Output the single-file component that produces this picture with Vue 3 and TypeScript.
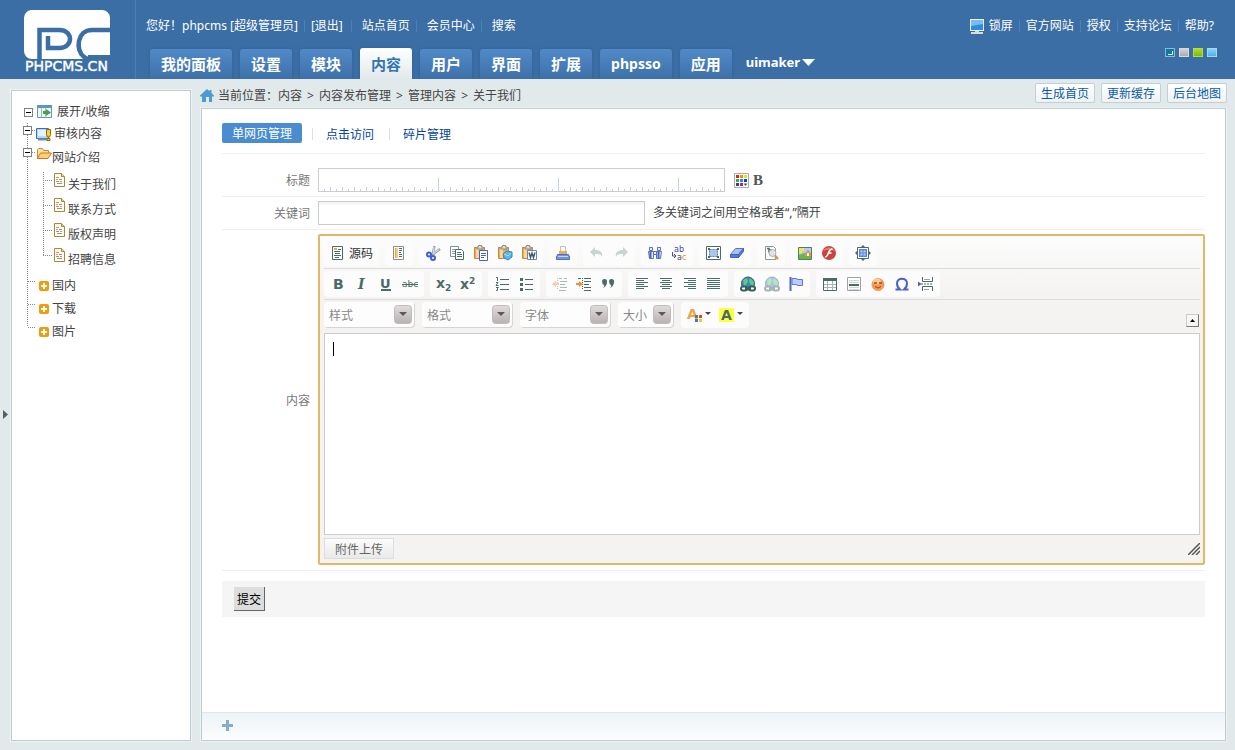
<script setup lang="ts">
import { ref } from 'vue'

interface Tool { icon: string; label: string; dim?: boolean }
interface Combo { label: string; small?: boolean }

const tabs = ['我的面板', '设置', '模块', '内容', '用户', '界面', '扩展', 'phpsso', '应用']
const activeTab = ref('内容')
const userLinks = ['站点首页', '会员中心', '搜索']
const helpLinks = ['官方网站', '授权', '支持论坛', '帮助?']
const crumbs = ['内容', '内容发布管理', '管理内容', '关于我们']
const shortcuts = ['生成首页', '更新缓存', '后台地图']
const pages = ['关于我们', '联系方式', '版权声明', '招聘信息']
const categories = ['国内', '下载', '图片']
const title = ref('')
const keywords = ref('')
const body = ref('')

const tool = (icon: string, label: string, dim = false): Tool => ({ icon, label, dim })

const rowOne: Tool[][] = [
  [tool('template', '模板')],
  [tool('cut', '剪切'), tool('copy', '复制'), tool('paste', '粘贴'), tool('pasteText', '粘贴为无格式文本'), tool('pasteWord', '从 Word 粘贴')],
  [tool('print', '打印')],
  [tool('undo', '撤销', true), tool('redo', '重做', true)],
  [tool('find', '查找'), tool('replace', '替换')],
  [tool('selectAll', '全选'), tool('eraser', '清除格式')],
  [tool('preview', '预览')],
  [tool('image', '图像'), tool('flash', 'Flash')],
  [tool('maximize', '全屏')],
]
const rowTwo: Tool[][] = [
  [tool('bold', '加粗'), tool('italic', '倾斜'), tool('underline', '下划线'), tool('strike', '删除线')],
  [tool('sub', '下标'), tool('sup', '上标')],
  [tool('ol', '编号列表'), tool('ul', '项目列表')],
  [tool('outdent', '减少缩进', true), tool('indent', '增加缩进'), tool('quote', '块引用')],
  [tool('left', '左对齐'), tool('center', '居中'), tool('right', '右对齐'), tool('justify', '两端对齐')],
  [tool('link', '超链接'), tool('unlink', '取消超链接', true), tool('anchor', '锚点')],
  [tool('table', '表格'), tool('rule', '水平线'), tool('smiley', '表情'), tool('omega', '特殊符号'), tool('pageBreak', '分页符')],
]
const combos: Combo[] = [{ label: '样式' }, { label: '格式' }, { label: '字体' }, { label: '大小', small: true }]

const ink = '#4a6b68'
const lines = (rows: number[][]) =>
  rows.map(([x, y, w]) => `<path d="M${x} ${y}.5h${w}" stroke="${ink}"/>`).join('')

const clipboard =
  '<path d="M1.5 2.5h10v11h-10z" fill="#f0a848" stroke="#c48a48"/><path d="M3 4h3v9H3z" fill="#ffd596"/><path d="M4 4V2h1.500V0.500h3V2H10v2z" fill="#dcdcdc" stroke="#888"/>'
const globe =
  '<circle cx="8" cy="7.500" r="6.500" fill="#3f7fe0" stroke="#2b4fa0"/><path d="M3 4l4-2 1 3-2 4-2 1zM10 2l4 4-1 4-3-2-1-3z" fill="#5fd060"/><path d="M1 12.500a2 2 0 012-2h2a2 2 0 010 4H3a2 2 0 01-2-2zM9 12.500a2 2 0 012-2h2a2 2 0 010 4h-2a2 2 0 01-2-2zM5 12.500h6" fill="#fff" stroke="#3d5d58" stroke-width="2"/>'

const icons: Record<string, string> = {
  source: `<path d="M2.500 1.500h10v13h-10z" fill="#fff" stroke="${ink}"/><path d="M4 4.500h3M4 3.500h3" stroke="#f0a040"/><path d="M8 4.500h3M4 6.500h6M5 8.500h5M4 10.500h7M5 12.500h4" stroke="${ink}"/>`,
  template: `<path d="M2.500 1.500h10v13h-10z" fill="#fff" stroke="#8a8f80"/><path d="M4 3h3v10H4z" fill="#fbc880"/><path d="M4.500 3v10" stroke="#f0a040"/><path d="M8 3.500h3M8 5.500h3M8 7.500h2M8 9.500h3M8 11.500h3" stroke="${ink}"/>`,
  cut: '<path d="M9.500 1L8 8M15 4L7 10" stroke="#9aa4a8" stroke-width="2.500"/><path d="M9 2L8.500 8M14 4.500L8 9" stroke="#dfe5e8"/><circle cx="4" cy="9.500" r="2" fill="#fff" stroke="#3a62d0" stroke-width="2"/><circle cx="8" cy="13" r="2" fill="#fff" stroke="#3a62d0" stroke-width="2"/>',
  copy: `<path d="M1.500 1.500h8v10h-8z" fill="#fff" stroke="#7d9491"/><path d="M3 4.500h4M3 6.500h3M3 8.500h4" stroke="#8ba09d"/><path d="M6.500 4.500h6l2 2v8h-8z" fill="#fff" stroke="${ink}"/><path d="M8 7.500h4M8 9.500h5M8 11.500h5" stroke="${ink}"/>`,
  paste: clipboard + '<path d="M6.500 5.500h8v10h-8z" fill="#fff" stroke="#4560c8"/><path d="M8 8.500h5M8 10.500h5M8 12.500h3" stroke="#4560c8"/>',
  pasteText: clipboard + '<path d="M6 9l4-3 5 1v5l-4 3-4-2z" fill="#58b8e8" stroke="#3484c0"/><path d="M7 9l4 2 3-3" stroke="#a8e0f8" fill="none"/>',
  pasteWord: clipboard + '<path d="M6.500 5.500h9v9h-9z" fill="#fff" stroke="#6a8aa0"/><path d="M8 7.500l1.500 5L11 8l1.500 4.500L14 7.500" fill="none" stroke="#3d5d78" stroke-width="1.500"/>',
  print: '<path d="M5.500 1.500h5v6h-5z" fill="#fff" stroke="#b8c0c8"/><path d="M4 6h8v3H4z" fill="#f4a848"/><path d="M2.500 9.500h11l1 2.500v2.500h-13V12z" fill="#6b93e8" stroke="#4f70c8"/><path d="M3 11.500h10" stroke="#c8dcff"/>',
  undo: '<path d="M1 7l5-5v3c5 0 8 2 7 7-1-3-3-3-7-3v3z" fill="#8fa39f"/>',
  redo: '<path d="M15 7l-5-5v3c-5 0-8 2-7 7 1-3 3-3 7-3v3z" fill="#8fa39f"/>',
  find: '<path d="M2.500 2.500h3v3h-3zM10.500 2.500h3v3h-3zM1.500 6.500h5v7h-4zM9.500 6.500h5l-1 7h-4zM6.500 6.500h3v3h-3z" fill="#e6eeff" stroke="#5c70b4"/><path d="M3.500 7v6M11.500 7v6" stroke="#4060c0" stroke-width="2"/>',
  replace: '<text x="3" y="7" font-size="8" font-family="DejaVu Sans" fill="#4448a0">ab</text><text x="6" y="15" font-size="8" font-family="DejaVu Sans" fill="#4448a0">a</text><text x="11" y="15" font-size="8" font-family="DejaVu Sans" fill="#f09020">c</text><path d="M1.500 7v4h3M3 9l2 2-2 2" stroke="#4448a0" fill="none"/>',
  selectAll: `<path d="M1.500 1.500h14v13h-14z" fill="#fff" stroke="${ink}"/><path d="M4.500 4.500h8v7h-8z" fill="#a9c6f2" stroke="#5b7fb0" stroke-dasharray="2 1"/><path d="M3 3h2v2H3zM12 3h2v2h-2zM3 11h2v2H3zM12 11h2v2h-2z" fill="${ink}"/>`,
  eraser: '<path d="M6.500 3.500h8l-5 6h-8z" fill="#a6c2f8" stroke="#5674cc"/><path d="M1.500 9.500h8v3h-8zM9.500 9.500l5-6v3l-5 6z" fill="#557be0" stroke="#4563c0"/>',
  preview: `<path d="M2.500 1.500h8l2 2v11h-10z" fill="#fff" stroke="#8b9794"/><path d="M4 3.500h2v4M6 5h3" stroke="${ink}" stroke-width="1.500" fill="none"/><circle cx="9.500" cy="8" r="3.500" fill="#dfe3e5" stroke="#a9b0b2"/><path d="M12 11l3 3" stroke="#e09838" stroke-width="2.500"/>`,
  image: '<path d="M1.500 2.500h13v12h-13z" fill="#9fd4ff" stroke="#587868"/><path d="M2 10l5-2 7 3v3H2z" fill="#67b845"/><path d="M2 3h5v3H5v2H2z" fill="#ffe24a"/><path d="M8 8l3-3 3 3v3H8z" fill="#f09040"/><path d="M10 8h2v3h-2z" fill="#fff"/>',
  flash: '<circle cx="8" cy="8" r="7" fill="#c8443c"/><path d="M2 6a7 7 0 0112 0q-6-3-12 0" fill="#dd8078"/><path d="M11.500 4C8 4 8 7 7 9s-1 3-3 3M7 8h3.500" fill="none" stroke="#fff" stroke-width="1.600"/>',
  maximize: `<path d="M8 0l2 2H6zM8 16l2-2H6zM0 8l2-2v4zM16 8l-2-2v4z" fill="${ink}"/><path d="M2.500 2.500h11v11h-11z" fill="#fff" stroke="${ink}"/><path d="M4 4h8v8H4z" fill="#5a83dc"/><path d="M5.500 5.500h5v5h-5z" fill="#bcd4ff" stroke="#83a7ef"/><path d="M8 5v6M5 8h6" stroke="#5a83dc"/>`,
  bold: `<text x="3" y="13" font-size="14" font-weight="700" font-family="DejaVu Sans" fill="${ink}">B</text>`,
  italic: `<text x="4" y="13" font-size="14" font-weight="700" font-style="italic" font-family="DejaVu Serif" fill="${ink}">I</text>`,
  underline: `<text x="2" y="12" font-size="13" font-weight="700" font-family="DejaVu Sans" fill="${ink}">U</text><path d="M3 14h10" stroke="${ink}" stroke-width="2"/>`,
  strike: `<text x="0" y="11" font-size="9" font-family="DejaVu Sans" fill="${ink}">abc</text><path d="M0 8.500h16" stroke="${ink}"/>`,
  sub: `<text x="0" y="12" font-size="14" font-weight="700" font-family="DejaVu Sans" fill="${ink}">x</text><text x="9" y="15" font-size="9" font-weight="700" font-family="DejaVu Sans" fill="${ink}">2</text>`,
  sup: `<text x="0" y="13" font-size="14" font-weight="700" font-family="DejaVu Sans" fill="${ink}">x</text><text x="9" y="8" font-size="9" font-weight="700" font-family="DejaVu Sans" fill="${ink}">2</text>`,
  ol: lines([[6, 3, 9], [6, 8, 9], [6, 13, 9]]) + `<path d="M2 1.500h1.500V5M2 6.500h2L2 9.500h2.500M2 11.500h2.500L3 13l1 1-2 .5" fill="none" stroke="${ink}"/>`,
  ul: lines([[7, 3, 8], [7, 8, 8], [7, 13, 8]]) + `<path d="M2 2h3v3H2zM2 7h3v3H2zM2 12h3v3H2z" fill="${ink}"/>`,
  outdent: lines([[7, 2, 3], [12, 2, 3], [8, 5, 7], [8, 8, 5], [8, 11, 7], [7, 14, 7]]) + '<path d="M5.500 2v12" stroke="#789" stroke-dasharray="1 1"/><path d="M0 8l4-3v2h3v2H4v2z" fill="#f4902c"/>',
  indent: lines([[2, 2, 3], [8, 2, 7], [8, 5, 7], [8, 8, 5], [8, 11, 7], [8, 14, 7]]) + `<path d="M6.500 2v12" stroke="${ink}" stroke-dasharray="1 1"/><path d="M7 8L3 5v2H0v2h3v2z" fill="#f4902c"/>`,
  quote: `<path d="M2 5a2.500 2.500 0 115 1q0 4-4 6 2-2 1-3-2-1-2-4zM9 5a2.500 2.500 0 115 1q0 4-4 6 2-2 1-3-2-1-2-4z" fill="${ink}"/>`,
  left: lines([[2, 2, 12], [2, 4, 8], [2, 6, 12], [2, 8, 8], [2, 10, 12], [2, 12, 8]]),
  center: lines([[2, 2, 12], [4, 4, 8], [2, 6, 12], [4, 8, 8], [2, 10, 12], [4, 12, 8]]),
  right: lines([[2, 2, 12], [6, 4, 8], [2, 6, 12], [6, 8, 8], [2, 10, 12], [6, 12, 8]]),
  justify: lines([[1, 2, 13], [1, 4, 13], [1, 6, 13], [1, 8, 13], [1, 10, 13], [1, 12, 13]]),
  link: globe,
  unlink: globe,
  anchor: '<path d="M2.500 1v14" stroke="#4a68c8" stroke-width="2"/><path d="M4 2.500h4l2 1h4.500v6H10l-2-1H4z" fill="#b9cdf5" stroke="#6078c0"/>',
  table: `<path d="M1.500 2.500h13v12h-13z" fill="#fff" stroke="${ink}"/><path d="M1 2h14v3H1z" fill="${ink}"/><path d="M2 8.500h12M2 11.500h12M5.500 5v9M10.500 5v9" stroke="#a9b6b4"/>`,
  rule: `<path d="M1.500 1.500h13v13h-13z" fill="#fff" stroke="#9aa5a3"/><path d="M3 4.500h10M3 6.500h10M3 11.500h10M3 13.500h10" stroke="#cfd6d4"/><path d="M3 9h10" stroke="${ink}" stroke-width="2"/>`,
  smiley: '<circle cx="8" cy="8.500" r="6.500" fill="#f49a50"/><ellipse cx="7" cy="5.500" rx="4" ry="3" fill="#ffc890"/><path d="M4 7h3M9 7h3" stroke="#8a5030" stroke-width="1.500"/><path d="M5 10.500q3 3 6 0" fill="none" stroke="#b03820"/>',
  omega: '<path d="M1.500 13.500H6Q3 11 3 7.500C3 1 13 1 13 7.500Q13 11 10 13.500h4.500" fill="none" stroke="#4a60c8" stroke-width="2"/>',
  pageBreak: `<path d="M4.500 1v4.500h10V1M4.500 15v-4.500h10V15" fill="#fff" stroke="${ink}"/><path d="M3 8h12" stroke="${ink}" stroke-dasharray="2 1"/><path d="M0 5.500L3.500 8 0 10.500z" fill="#4a60c8"/><path d="M6 3.500h6M6 13.500h5" stroke="#9aa5a3"/>`,
}
</script>

<template>
  <div class="page">
    <header class="top">
      <a class="logo" href="#" aria-label="PHPCMS.CN">
        <svg width="90" height="64" viewBox="23 9 90 64">
          <path d="M31 10h71a8 8 0 0 1 8 8v37H88v4H32a8 8 0 0 1-8-8V18a8 8 0 0 1 7-8z" fill="#fff" />
          <path d="M39.500 60V30h20c14 0 14 18 0 18H48V36" fill="none" stroke="#3b6ea5" stroke-width="4.500" />
          <path d="M111 30H92C77 30 75 50 84 57l5 3" fill="none" stroke="#3b6ea5" stroke-width="4.500" />
          <text x="25" y="71" font-size="14" font-family="DejaVu Sans, sans-serif" fill="#fff" stroke="#fff" stroke-width=".4">PHPCMS.CN</text>
        </svg>
      </a>
      <div class="top-main">
        <div class="top-row">
          <div class="greeting">
            <span>您好！phpcms [超级管理员]</span>
            <a class="tight" href="#">[退出]</a>
            <a v-for="item in userLinks" :key="item" href="#">{{ item }}</a>
          </div>
          <div class="help">
            <a class="lock" href="#">
              <svg width="16" height="16" viewBox="0 0 16 16" aria-hidden="true">
                <path d="M1 1h14v12H1z" fill="#e8f2fb" /><path d="M2 2h12v10H2z" fill="#2f8be0" />
                <path d="M2 2h12v4L2 8z" fill="#7abcf4" /><path d="M6 13h4v1H6zM2 14h12v2H2z" fill="#d5dde4" />
              </svg>锁屏</a>
            <a v-for="item in helpLinks" :key="item" href="#">{{ item }}</a>
          </div>
        </div>
        <div class="tab-row">
          <nav class="tabs">
            <a v-for="tab in tabs" :key="tab" href="#" :class="['tab', { active: tab === activeTab, latin: tab === 'phpsso' }]" @click.prevent="activeTab = tab">{{ tab }}</a>
            <button class="more" type="button">uimaker
              <svg width="13" height="7" viewBox="0 0 13 7" aria-hidden="true"><path d="M0 0h13L6.500 7z" fill="#fff" /></svg>
            </button>
          </nav>
          <div class="skins">
            <button class="skin teal" type="button" aria-label="默认风格"><svg width="8" height="7" viewBox="0 0 8 7"><path d="M2 5.500h4.500V2" stroke="#fff" fill="none" /></svg></button>
            <button class="skin gray" type="button" aria-label="灰色风格"></button>
            <button class="skin green" type="button" aria-label="绿色风格"></button>
            <button class="skin sky" type="button" aria-label="天蓝风格"></button>
          </div>
        </div>
      </div>
    </header>

    <div class="body">
      <button class="gutter" type="button" aria-label="展开与关闭">
        <svg width="7" height="11" viewBox="0 0 7 11"><path d="M1 1v9l5-4.500z" fill="#555f66" /></svg>
      </button>
      <aside class="side">
        <a class="node root" href="#">
          <span class="toggle"></span>
          <svg class="pic" width="16" height="16" viewBox="0 0 16 16" aria-hidden="true">
            <path d="M.5 1.500h14v12H.5z" fill="#eef7ee" stroke="#6f96b8" /><path d="M0 1h15v3H0z" fill="#5d93cf" />
            <path d="M4.500 4v9M8.500 4v9" stroke="#9cc0a8" /><path d="M6 7h3V5l5 3.500-5 3.500v-2H6z" fill="#46a052" />
          </svg>
          <span>展开/收缩</span>
        </a>
        <ul class="branch">
          <li>
            <a class="node first" href="#">
              <span class="toggle"></span><i class="dots short"></i>
              <svg class="pic" width="16" height="16" viewBox="0 0 16 16" aria-hidden="true">
                <path d="M.5 2.500h12v10H.5z" fill="#b8d8f8" stroke="#3b6ab8" /><path d="M2 4h8v6H2z" fill="#e4f2ff" /><path d="M2 13.500h9" stroke="#7a8ca8" stroke-width="2" />
                <path d="M10.500 3.500h4v5l-1 2.500h-2l-1-2.500z" fill="#f8d030" stroke="#8a6a10" /><path d="M11 12.500h3v2h-3z" fill="#f8d030" stroke="#8a6a10" />
              </svg>
              <span>审核内容</span>
            </a>
          </li>
          <li>
            <a class="node folder" href="#">
              <span class="toggle"></span><i class="dots short"></i>
              <svg class="pic" width="16" height="14" viewBox="0 0 16 14" aria-hidden="true">
                <path d="M1.500 11.500v-9l1-1h4l1 2h5v3" fill="#ffe2a0" stroke="#c88a30" /><path d="M1.500 11.500l3-5.500h11l-3.500 5.500z" fill="#ffcf78" stroke="#c07a28" />
              </svg>
              <span>网站介绍</span>
            </a>
            <ul class="leaves">
              <li v-for="page in pages" :key="page">
                <a class="leaf" href="#">
                  <i class="dots"></i>
                  <svg width="12" height="14" viewBox="0 0 12 14" aria-hidden="true">
                    <path d="M.5.500h7l3 3v10H.5z" fill="#fffdf2" stroke="#a8873a" /><path d="M7.500.500v3h3" fill="#e8d49a" stroke="#a8873a" />
                    <path d="M2 4.500h3M2 6.500h2M6 8.500h2" stroke="#f08078" /><path d="M5 6.500h3M2 8.500h3M3 10.500h5" stroke="#7f9f90" />
                  </svg>
                  <span>{{ page }}</span>
                </a>
              </li>
            </ul>
          </li>
          <li v-for="item in categories" :key="item">
            <a class="category" href="#">
              <i class="dots"></i>
              <svg width="10" height="10" viewBox="0 0 10 10" aria-hidden="true">
                <rect width="10" height="10" rx="2" fill="#f09c08" /><path d="M5 2v6M2 5h6" stroke="#fff" stroke-width="2" />
              </svg>
              <span>{{ item }}</span>
            </a>
          </li>
        </ul>
      </aside>

      <div class="main">
        <div class="bar">
          <nav class="crumbs" aria-label="当前位置">
            <svg width="14" height="13" viewBox="0 0 14 13" aria-hidden="true"><path d="M7 0l2.500 2.200V1h2v3L14 6.500V7.500h-2V13H9V8H6v5H2V7.500H0v-1z" fill="#4e9bd0" /></svg>
            <span class="where">当前位置：</span>
            <template v-for="(crumb, i) in crumbs" :key="crumb"><span v-if="i" class="sep">&gt;</span><span>{{ crumb }}</span></template>
          </nav>
          <div class="shortcuts"><button v-for="item in shortcuts" :key="item" type="button">{{ item }}</button></div>
        </div>

        <section class="panel">
          <form class="content" @submit.prevent>
            <nav class="subtabs">
              <a class="current" href="#">单网页管理</a>
              <a href="#">点击访问</a>
              <a href="#">碎片管理</a>
            </nav>

            <div class="row title-row">
              <label for="title">标题</label>
              <div class="field">
                <input id="title" v-model="title" class="ruler" type="text">
                <button class="bare palette" type="button" aria-label="标题颜色">
                  <svg width="15" height="15" viewBox="0 0 15 15">
                    <path d="M.5.500h14v14H.5z" fill="#fff" stroke="#aaa" />
                    <path d="M2 2h3v3H2z" fill="#e02010" /><path d="M6 2h3v3H6z" fill="#f88820" /><path d="M10 2h3v3h-3z" fill="#ffd800" />
                    <path d="M2 6h3v3H2z" fill="#30b030" /><path d="M6 6h3v3H6z" fill="#1890f0" /><path d="M10 6h3v3h-3z" fill="#1040b0" />
                    <path d="M2 10h3v3H2z" fill="#3838a0" /><path d="M6 10h3v3H6z" fill="#a020c0" /><path d="M9.500 10.500h4L11.500 13z" fill="#555" />
                  </svg>
                </button>
                <button class="bare strong" type="button" aria-label="标题加粗">B</button>
              </div>
            </div>

            <div class="row">
              <label for="keywords">关键词</label>
              <div class="field">
                <input id="keywords" v-model="keywords" class="keywords" type="text">
                <span class="hint">多关键词之间用空格或者“,”隔开</span>
              </div>
            </div>

            <div class="row body-row">
              <label for="body">内容</label>
              <div class="editor">
                <div class="tools">
                  <div class="group">
                    <button class="tool wide" type="button"><svg width="16" height="16" viewBox="0 0 16 16" v-html="icons.source"></svg><span>源码</span></button>
                  </div>
                  <div v-for="(group, g) in rowOne" :key="g" class="group">
                    <button v-for="t in group" :key="t.icon" :class="['tool', { dim: t.dim }]" type="button" :aria-label="t.label">
                      <svg width="16" height="16" viewBox="0 0 16 16" v-html="icons[t.icon]"></svg>
                    </button>
                  </div>
                </div>
                <div class="tools">
                  <div v-for="(group, g) in rowTwo" :key="g" class="group">
                    <button v-for="t in group" :key="t.icon" :class="['tool', { dim: t.dim }]" type="button" :aria-label="t.label">
                      <svg width="16" height="16" viewBox="0 0 16 16" v-html="icons[t.icon]"></svg>
                    </button>
                  </div>
                </div>
                <div class="tools last">
                  <div v-for="combo in combos" :key="combo.label" :class="['combo', { small: combo.small }]">
                    <select :aria-label="combo.label"><option>{{ combo.label }}</option></select>
                    <svg width="18" height="19" viewBox="0 0 18 19" aria-hidden="true">
                      <defs><linearGradient id="knob" x2="0" y2="1"><stop offset="0" stop-color="#e2dcdc" /><stop offset="1" stop-color="#b9b1b1" /></linearGradient></defs>
                      <rect x=".5" y=".5" width="17" height="18" rx="3" fill="url(#knob)" stroke="#c2bbbb" /><path d="M5 7h8l-4 4z" fill="#5a5a5a" />
                    </svg>
                  </div>
                  <div class="group">
                    <button class="tool color" type="button" aria-label="文本颜色">
                      <svg width="24" height="16" viewBox="0 0 24 16">
                        <text x="0" y="12" font-size="14" font-weight="700" font-family="DejaVu Sans" fill="#f2a04c">A</text>
                        <path d="M8 8h3v3H8z" fill="#3a9a48" /><path d="M12 8h3v3h-3z" fill="#e04038" /><path d="M8 12h3v3H8z" fill="#3a78e0" /><path d="M12 12h3v3h-3z" fill="#f8c828" />
                        <path d="M18 5h6l-3 3z" fill="#444" />
                      </svg>
                    </button>
                    <button class="tool color" type="button" aria-label="背景颜色">
                      <svg width="24" height="16" viewBox="0 0 24 16">
                        <path d="M0 1h15v14H0z" fill="#ffff40" /><text x="2" y="13" font-size="14" font-weight="700" font-family="DejaVu Sans" :fill="ink">A</text><path d="M18 5h6l-3 3z" fill="#444" />
                      </svg>
                    </button>
                  </div>
                  <button class="fold" type="button" aria-label="折叠工具栏"><svg width="5" height="3" viewBox="0 0 5 3"><path d="M2.500 0L5 3H0z" /></svg></button>
                </div>
                <textarea id="body" v-model="body"></textarea>
                <div class="editor-foot">
                  <button class="attach" type="button">附件上传</button>
                  <svg width="12" height="12" viewBox="0 0 12 12" aria-hidden="true"><path d="M0 12L12 0M4 12l8-8M8 12l4-4" stroke="#555" stroke-width="1.500" /></svg>
                </div>
              </div>
            </div>

            <div class="submit"><button type="submit">提交</button></div>
          </form>
          <footer class="panel-foot">
            <button class="bare" type="button" aria-label="添加"><svg width="11" height="11" viewBox="0 0 11 11"><path d="M4 0h3v4h4v3H7v4H4V7H0V4h4z" fill="#84aec8" /></svg></button>
          </footer>
        </section>
      </div>
    </div>
  </div>
</template>

<style>
body { margin: 0; }
</style>

<style scoped>
* { box-sizing: border-box; }
.page {
  display: flex;
  flex-direction: column;
  min-height: 100vh;
  background: #e1e9ea;
  color: #444;
  font: 12px/18px "Noto Sans", "Noto Sans CJK SC", sans-serif;
}
a { color: inherit; text-decoration: none; }
button, input, select, textarea { font: inherit; margin: 0; padding: 0; }
button { cursor: pointer; white-space: nowrap; }
ul { list-style: none; margin: 0; padding: 0; }
svg { display: block; flex: none; }

.top { display: flex; height: 79px; background: #3b6ea5; color: #fff; }
.logo { width: 136px; padding: 9px 0 0 23px; border-right: 1px solid #4880bd; flex: none; }
.top-main { flex: 1; display: flex; flex-direction: column; justify-content: space-between; padding: 17px 18px 0 10px; }
.top-row, .tab-row, .greeting, .help, .lock { display: flex; }
.top-row, .tab-row { justify-content: space-between; }
.greeting, .help { align-items: center; white-space: nowrap; }
.greeting span { padding-right: 6px; }
.greeting a, .help a { line-height: 12px; }
.greeting a { border-left: 1px solid #4c80b8; padding: 0 6px 0 10px; }
.greeting .tight { padding: 0 8px 0 6px; }
.help { padding-right: 3px; }
.help a + a { border-left: 1px solid #4c80b8; padding-left: 6px; }
.help a:not(:last-child) { padding-right: 6px; }
.lock { align-items: center; gap: 4px; }
.tab-row { align-items: flex-end; }
.tabs { display: flex; align-items: flex-end; gap: 8px; margin-left: 4px; }
.tab {
  height: 30px;
  padding: 0 11px;
  border-radius: 3px 3px 0 0;
  background: linear-gradient(#518ac8, #3d70a8);
  box-shadow: 0 0 3px #2f5d92;
  clip-path: inset(-4px -4px 0 -4px);
  font-size: 15px;
  font-weight: 700;
  line-height: 30px;
}
.tab.latin { font-size: 14px; }
.tab.active { height: 31px; background: linear-gradient(#fff, #e1e9ea); color: #2f75b5; line-height: 32px; }
.more { display: flex; align-items: center; gap: 2px; height: 34px; padding: 0 0 0 6px; border: 0; background: none; color: #fff; font-size: 13px; font-weight: 700; }
.skins { display: flex; gap: 4px; align-self: flex-start; padding-top: 3px; }
.skin { display: block; width: 10px; height: 9px; border: 1px solid #7ac0dc; }
.teal { background: #16779c; }
.gray { background: linear-gradient(#d5d5d5, #aaa); border-color: #d8dade; }
.green { background: linear-gradient(#b0dc20, #7cb810); border-color: #b5dc50; }
.sky { background: linear-gradient(#8ed4f8, #4eaeea); border-color: #9be0fa; }

.body { flex: 1; display: flex; padding: 0 8px 9px 0; }
.gutter { width: 11px; flex: none; border: 0; background: none; padding: 9px 0 0 2px; }
.side { width: 180px; flex: none; margin: 11px 9px 0 0; padding: 10px 0 0 11px; border: 1px solid #bccdd3; background: #fff; box-shadow: 0 0 0 1px #edf3f4; }
.node, .leaf, .category { display: flex; align-items: center; }
.node { height: 22px; }
.root { padding-left: 1px; gap: 4px; }
.folder { height: 26px; }
.toggle {
  width: 9px; height: 9px; flex: none; border: 1px solid #808080;
  background: linear-gradient(#000, #000) center / 5px 1px no-repeat #fff;
}
.branch { background: repeating-linear-gradient(#888 0 1px, transparent 1px 2px) 4px 0 / 1px calc(100% - 16px) no-repeat; }
.branch .toggle { align-self: flex-start; margin-top: 3px; }
.dots { flex: none; width: 8px; height: 1px; background: repeating-linear-gradient(90deg, #888 0 1px, transparent 1px 2px); }
.dots.short { width: 4px; align-self: flex-start; margin-top: 7px; }
.first .pic { margin-right: 2px; }
.folder .pic { align-self: flex-start; margin-top: 2px; }
.leaves { margin: 1px 0 2px 20px; background: repeating-linear-gradient(#888 0 1px, transparent 1px 2px) 0 0 / 1px calc(100% - 17px) no-repeat; }
.leaf { height: 25px; gap: 2px; }
.leaf .dots { width: 9px; margin-bottom: 9px; }
.leaf svg { margin-bottom: 9px; }
.category { height: 23px; gap: 3px; padding-left: 5px; }
.category .dots { margin-bottom: 9px; }

.main { flex: 1; min-width: 0; display: flex; flex-direction: column; }
.bar { display: flex; justify-content: space-between; height: 29px; }
.crumbs { display: flex; align-items: center; height: 32px; white-space: nowrap; }
.crumbs span { padding-top: 2px; }
.where { margin-left: 4px; }
.sep { width: 17px; text-align: center; }
.shortcuts { display: flex; gap: 6px; padding-top: 4px; }
.shortcuts button { height: 20px; padding: 1px 5px 0; border: 1px solid #c0d0d5; border-radius: 2px; background: linear-gradient(#fff, #eef2f3); color: #0a5ba8; line-height: 17px; }
.panel { flex: 1; display: flex; flex-direction: column; margin: 0 1px; border: 1px solid #bccdd3; background: #fff; box-shadow: 0 0 0 1px #edf3f4; }
.content { flex: 1; padding: 14px 20px; }
.subtabs { display: flex; align-items: flex-start; height: 31px; border-bottom: 1px solid #eee; line-height: 20px; color: #044599; }
.subtabs a { padding: 2px 0 0; }
.subtabs a + a { margin-left: 10px; padding-left: 14px; background: linear-gradient(#e2dce8, #e2dce8) 0 5px / 1px 12px no-repeat; }
.subtabs a + a + a { margin-left: 15px; }
.subtabs .current { height: 20px; padding: 1px 10px 0; border-radius: 2px; background: #498cd0; color: #fff; }
.row { display: grid; grid-template-columns: 88px minmax(0, 1fr); gap: 8px; align-items: center; padding: 4px 0; border-bottom: 1px solid #eee; }
.title-row { padding-top: 14px; }
.body-row { padding-bottom: 5px; }
.row > label { padding-top: 2px; text-align: right; color: #777; }
.field { display: flex; align-items: center; }
.field input { height: 24px; border: 1px solid #ccc; outline: 0; padding: 0 4px; }
.ruler {
  width: 407px;
  background:
    linear-gradient(90deg, transparent 119px, #c3cdf0 119px) 0 100% / 120px 13px repeat-x,
    linear-gradient(90deg, transparent 11px, #c3cdf0 11px) 0 100% / 12px 4px repeat-x,
    linear-gradient(90deg, transparent 5px, #c3cdf0 5px) 0 100% / 6px 2px repeat-x,
    #fff;
}
.keywords { width: 327px; background: linear-gradient(#f0f0f0, #fff 4px); }
.bare { display: block; border: 0; background: none; }
.palette { margin: 0 4px 0 9px; }
.strong { color: #555; font: 700 15px/16px "Liberation Serif", serif; }
.hint { margin-left: 8px; }

.editor { border: 2px solid #e5b765; border-radius: 2px; padding: 4px 3px 4px 4px; background: linear-gradient(#fcfcfc, #f4f3f1 60px); }
.tools { display: flex; gap: 6px; height: 29px; margin-bottom: 2px; border-bottom: 1px solid #dcdcdb; }
.tools.last { gap: 7px; border-bottom: 0; }
.group { display: flex; height: 26px; padding: 2px; border-radius: 4px; background: #fcfcfc; }
.tool { display: flex; align-items: center; gap: 3px; padding: 0 4px; border: 0; background: none; color: #333; }
.tool span { padding-top: 2px; }
.dim { opacity: 0.45; }
.combo { display: grid; grid-template-columns: minmax(0, 1fr) 18px 3px; align-items: center; width: 91px; height: 26px; border-radius: 4px; background: #fdfdfd; box-shadow: inset -1px -1px #d5d5d5; }
.combo.small { width: 56px; }
.combo select { grid-area: 1 / 1 / 2 / 4; height: 24px; padding: 2px 0 0 5px; appearance: none; border: 0; outline: 0; background: none; color: #888; }
.combo svg { grid-area: 1 / 2; margin-bottom: 2px; pointer-events: none; }
.fold { display: grid; place-items: center; width: 13px; height: 13px; margin: 12px 1px 0 auto; border: 1px solid; border-color: #ccc #777 #777 #ccc; background: #f6f6f6; }
textarea {
  display: block; width: 100%; height: 202px; padding: 8px; resize: none; outline: 0; border: 1px solid #ccc;
  background: linear-gradient(#000, #000) 8px 8px / 1px 14px no-repeat #fff;
}
.editor-foot { display: flex; justify-content: space-between; align-items: center; padding-top: 3px; }
.attach { height: 21px; padding: 2px 10px 0; border: 1px solid #ddd; background: linear-gradient(#fcfcfc, #e9e9e9); color: #666; line-height: 18px; }
.submit { margin-top: 10px; padding: 6px 12px; background: #f5f5f5; }
.submit button { display: block; height: 24px; padding: 3px 3px 0; border: 0; border-right: 1px solid #666; border-bottom: 1px solid #666; background: #ddd; color: #000; }
.panel-foot { height: 28px; padding: 7px 20px; border-top: 1px solid #dfe7ea; background: linear-gradient(#edf3f7, #fcfdfe); }
</style>
